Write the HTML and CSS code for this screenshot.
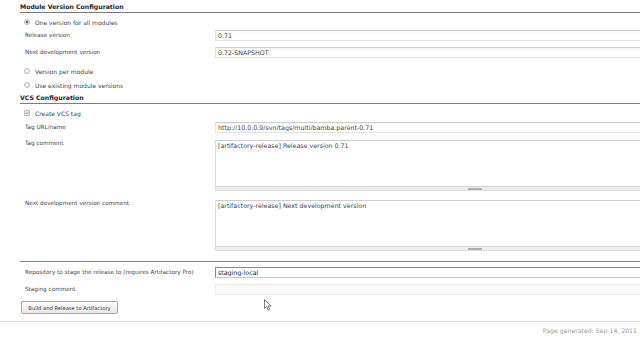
FILE: index.html
```html
<!DOCTYPE html>
<html lang="en">
<head>
	<meta charset="utf-8">
	<title>Build and Release to Artifactory</title>
	<link rel="stylesheet" href="styles.css">
</head>
<body>

	<form class="release">
		<h3 class="section-title section-title--module">Module Version Configuration</h3>

		<label class="option option--first"><input class="option__mark" type="radio" name="versioning" checked> One version for all modules</label>

		<div class="field field--first">
			<span class="field__label">Release version</span>
			<input class="field__input" type="text" value="0.71">
		</div>
		<div class="field field--next">
			<span class="field__label">Next development version</span>
			<input class="field__input" type="text" value="0.72-SNAPSHOT">
		</div>

		<label class="option option--gap"><input class="option__mark" type="radio" name="versioning"> Version per module</label>
		<label class="option"><input class="option__mark" type="radio" name="versioning"> Use existing module versions</label>

		<h3 class="section-title section-title--vcs">VCS Configuration</h3>

		<label class="option option--first"><input class="option__mark option__mark--box" type="checkbox" checked> Create VCS tag</label>

		<div class="field field--url">
			<span class="field__label">Tag URL/name</span>
			<input class="field__input" type="text" value="http://10.0.0.9/svn/tags/multi/bamba.parent-0.71">
		</div>
		<div class="field field--area">
			<span class="field__label">Tag comment</span>
			<div class="area">
				<textarea class="area__text">[artifactory-release] Release version 0.71</textarea>
				<div class="area__bar"><span class="area__grip"></span></div>
			</div>
		</div>
		<div class="field field--area field--area-next">
			<span class="field__label">Next development version comment</span>
			<div class="area">
				<textarea class="area__text">[artifactory-release] Next development version</textarea>
				<div class="area__bar"><span class="area__grip"></span></div>
			</div>
		</div>

		<div class="staging">
			<div class="field field--repo">
				<span class="field__label">Repository to stage the release to (requires Artifactory Pro)</span>
				<input class="field__input field__input--select" type="text" value="staging-local">
			</div>
			<div class="field field--next">
				<span class="field__label">Staging comment</span>
				<input class="field__input field__input--soft" type="text" value="">
			</div>
			<button class="submit" type="button">Build and Release to Artifactory</button>
		</div>
	</form>

	<footer class="footer">Page generated: Sep 14, 2011</footer>

	<!-- mouse pointer caught in the capture -->
	<svg class="pointer" width="8" height="12" viewBox="0 0 8 12">
		<path d="M0.5 0.5 L0.5 9.5 L2.6 7.6 L4.2 11 L5.6 10.3 L4.1 7.1 L7 7.1 Z" fill="#fff" stroke="#555" stroke-width="0.8" stroke-linejoin="round"/>
	</svg>

</body>
</html>
```

FILE: styles.css
```css
html,
body {
	margin: 0;
	overflow: hidden;
	background: #fff;
}
body {
	position: relative;
	width: 640px;
	height: 360px;
	font-family: "DejaVu Sans", Verdana, sans-serif;
	font-size: 5.7px;
	color: #3f3f3f;
}

/* fields run on past the right edge, as in the capture */
.release {
	width: 620px;
	padding-left: 20px;
	overflow: hidden;
}

/* section headings */
.section-title {
	margin: 0;
	line-height: 10px;
	font-size: 6.2px;
	font-weight: bold;
	color: #262626;
	border-bottom: 1px solid #7c7c7c;
}
.section-title--module {
	padding-top: 2px;
}
.section-title--vcs {
	padding-top: 1px;
}

/* radios & checkbox */
.option {
	display: flex;
	align-items: center;
	gap: 5px;
	height: 14px;
	padding-left: 4px;
	font-size: 6px;
}
.option--first {
	margin-top: 2px;
}
.option--gap {
	margin-top: 6px;
}
.option__mark {
	-webkit-appearance: none;
	appearance: none;
	margin: 0;
	width: 6px;
	height: 6px;
	border: 1px solid #b9b9b9;
	border-radius: 50%;
	background: radial-gradient(circle, #fdfdfd 0, #e4e4e4 100%);
	box-sizing: border-box;
}
.option__mark:checked {
	background: radial-gradient(circle, #4d5a6e 0, #6f7c8e 35%, #dfe3e8 60%, #f4f4f4 100%);
}
.option__mark--box {
	border-radius: 1px;
}
.option__mark--box:checked {
	background: #e9e9e9 url("data:image/svg+xml;utf8,<svg xmlns='http://www.w3.org/2000/svg' viewBox='0 0 6 6'><path d='M1.2 3 L2.5 4.4 L4.9 1.2' fill='none' stroke='%23777' stroke-width='1'/></svg>") center / 100% no-repeat;
}

/* label + input rows */
.field {
	display: grid;
	grid-template-columns: 195px 520px;
	align-items: start;
}
.field__label {
	padding-left: 5px;
	line-height: 11px;
	white-space: nowrap;
}
.field--first {
	margin-top: 1px;
}
.field--next {
	margin-top: 6px;
}
.field--url {
	margin-top: 2px;
}
.field--area {
	margin-top: 7px;
}
.field--area .field__label {
	line-height: 7px;
}
.field--area-next {
	margin-top: 9px;
}
.field__input {
	box-sizing: border-box;
	height: 11px;
	margin: 0;
	padding: 0 2px;
	font: inherit;
	font-size: 6.3px;
	color: #3f3f3f;
	border: 1px solid #e2e2e2;
	border-top-color: #cfcfcf;
	background: linear-gradient(#f6f6f6, #fff 40%);
	outline: none;
}
.field__input--select {
	border: 1px solid #8a8a8a;
	border-right-color: #c8c8c8;
	border-bottom-color: #c8c8c8;
	background: #fff;
	color: #222;
}
.field__input--soft {
	border-color: #ececec;
	background: #fafafa;
}

/* textarea with resize bar */
.area {
	display: flex;
	flex-direction: column;
	height: 51px;
	box-sizing: border-box;
	border: 1px solid #dedede;
	border-top-color: #cdcdcd;
}
.area__text {
	flex: 1;
	margin: 0;
	padding: 0 2px;
	font: inherit;
	font-size: 6.3px;
	line-height: 9px;
	color: #3f3f3f;
	border: none;
	resize: none;
	outline: none;
	background: #fff;
}
.area__bar {
	display: flex;
	justify-content: center;
	align-items: flex-end;
	height: 3px;
	background: #ececec;
	border-top: 1px solid #d8d8d8;
}
.area__grip {
	width: 14px;
	height: 2px;
	background: #b0b0b0;
}

/* staging block */
.staging {
	margin-top: 10px;
	border-top: 1px solid #858585;
	padding-top: 5px;
}
.staging .field--next {
	margin-top: 6px;
}
.submit {
	display: block;
	box-sizing: border-box;
	width: 97px;
	height: 13px;
	margin: 6px 0 0 1px;
	padding: 0;
	font-family: inherit;
	font-size: 5.2px;
	color: #333;
	border: 1px solid #a8a8a8;
	border-radius: 2px;
	background: linear-gradient(#fdfdfd, #e8e8e8);
}

/* footer */
.footer {
	margin-top: 7px;
	border-top: 1px solid #dcdcdc;
	padding: 3px 3px 0 0;
	line-height: 12px;
	text-align: right;
	font-size: 6.2px;
	color: #9a9a9a;
}

.pointer {
	position: absolute;
	left: 264px;
	top: 299px;
}
```
